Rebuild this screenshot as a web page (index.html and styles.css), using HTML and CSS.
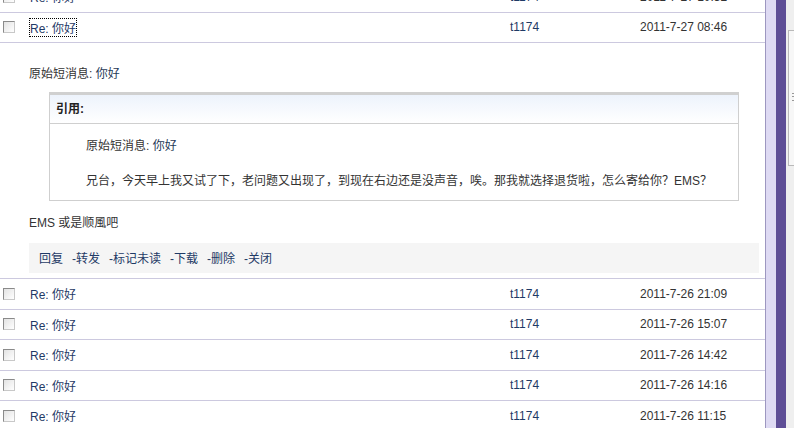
FILE: index.html
```html
<!DOCTYPE html>
<html>
<head>
<meta charset="utf-8">
<link rel="stylesheet" href="styles.css">
</head>
<body>
<div class="page">
  <div class="main">
    <div class="list">
      <div class="row"><span class="cb"></span><a class="subj">Re: 你好</a><a class="from">t1174</a><span class="date">2011-7-27 10:32</span></div>
      <div class="row"><span class="cb"></span><a class="subj focus">Re: 你好</a><a class="from">t1174</a><span class="date">2011-7-27 08:46</span></div>
      <div class="detail">
        <p class="orig">原始短消息: <span class="lk">你好</span></p>
        <div class="quote">
          <div class="qhead">引用:</div>
          <div class="qbody">
            <p>原始短消息: <span class="lk">你好</span></p>
            <p>兄台，今天早上我又试了下，老问题又出现了，到现在右边还是没声音，唉。那我就选择退货啦，怎么寄给你？EMS？</p>
          </div>
        </div>
        <p class="reply">EMS 或是顺風吧</p>
        <div class="actions"><a>回复</a><a>-转发</a><a>-标记未读</a><a>-下载</a><a>-删除</a><a>-关闭</a></div>
      </div>
      <div class="row"><span class="cb"></span><a class="subj">Re: 你好</a><a class="from">t1174</a><span class="date">2011-7-26 21:09</span></div>
      <div class="row"><span class="cb"></span><a class="subj">Re: 你好</a><a class="from">t1174</a><span class="date">2011-7-26 15:07</span></div>
      <div class="row"><span class="cb"></span><a class="subj">Re: 你好</a><a class="from">t1174</a><span class="date">2011-7-26 14:42</span></div>
      <div class="row"><span class="cb"></span><a class="subj">Re: 你好</a><a class="from">t1174</a><span class="date">2011-7-26 14:16</span></div>
      <div class="row"><span class="cb"></span><a class="subj">Re: 你好</a><a class="from">t1174</a><span class="date">2011-7-26 11:15</span></div>
    </div>
  </div>
  <div class="strip-light"></div>
  <div class="strip-dark"></div>
  <div class="side"><div class="scroll"><span class="grip"></span></div></div>
</div>
</body>
</html>
```

FILE: styles.css
```css
html, body {
  margin: 0;
  padding: 0;
  background: #ffffff;
  overflow: hidden;
}
body {
  font-family: "Liberation Sans", "Noto Sans CJK SC", sans-serif;
  font-size: 12px;
  color: #333333;
}
p { margin: 0; }
a { color: #1f3a66; text-decoration: none; }
.page {
  display: flex;
  width: 794px;
  height: 428px;
  overflow: hidden;
}
.main {
  width: 765px;
  flex: none;
  border-right: 1px solid #9d97c0;
  overflow: hidden;
}
.list {
  margin-top: -18px;
}
.row {
  height: 29.5px;
  border-bottom: 1px solid #ccc9df;
  display: flex;
  align-items: center;
}
.cb {
  width: 10px;
  height: 10px;
  border: 1px solid #8a8a8a;
  border-right-color: #c8c8c8;
  border-bottom-color: #c8c8c8;
  background: linear-gradient(135deg, #e2e2e2, #ffffff);
  margin-left: 3px;
  flex: none;
}
.subj {
  margin-left: 15px;
  width: 480px;
  flex: none;
}
.subj.focus {
  outline: 1px dotted #000;
  outline-offset: 0;
}
.row .subj.focus { width: auto; }
.row .subj.focus + .from { margin-left: calc(480px - 46px); }
.from {
  width: 130px;
  flex: none;
}
.date {
  color: #333;
}
.detail {
  border-bottom: 1px solid #ccc9df;
  padding: 23px 0 5px 29px;
}
.orig {
  line-height: 16px;
}
.lk { color: #1f3a57; }
.quote {
  margin: 10px 0 0 20px;
  width: 688px;
  border: 1px solid #cfcfcf;
  border-top: 3px solid #d0d0d0;
}
.qhead {
  height: 28px;
  line-height: 28px;
  padding-left: 6px;
  font-weight: bold;
  color: #222;
  background: linear-gradient(#edf3fc, #ffffff);
  border-bottom: 1px solid #cfcfcf;
}
.qbody {
  padding: 14px 0 11px 36px;
  line-height: 16px;
}
.qbody p + p {
  margin-top: 19px;
}
.reply {
  margin-top: 14px;
  line-height: 16px;
}
.actions {
  margin-top: 12px;
  width: 720px;
  height: 30px;
  line-height: 32px;
  padding-left: 10px;
  background: #f5f5f5;
  display: flex;
  gap: 9px;
}
.strip-light {
  width: 10px;
  flex: none;
  background: #dedaf3;
}
.strip-dark {
  width: 10px;
  flex: none;
  background: #5e4e96;
}
.side {
  flex: 1;
  background: #efefef;
  padding-top: 30px;
}
.scroll {
  margin-left: 2px;
  height: 134px;
  border: 1px solid #b9b9b9;
  border-right: none;
  background: #f7f7f7;
  position: relative;
}
.grip {
  position: absolute;
  left: 3px;
  top: 62px;
  width: 5px;
  height: 6px;
  border-top: 1px solid #999;
  border-bottom: 1px solid #999;
}
.grip::after {
  content: "";
  position: absolute;
  left: 0;
  top: 2px;
  width: 5px;
  border-top: 1px solid #999;
}
```
